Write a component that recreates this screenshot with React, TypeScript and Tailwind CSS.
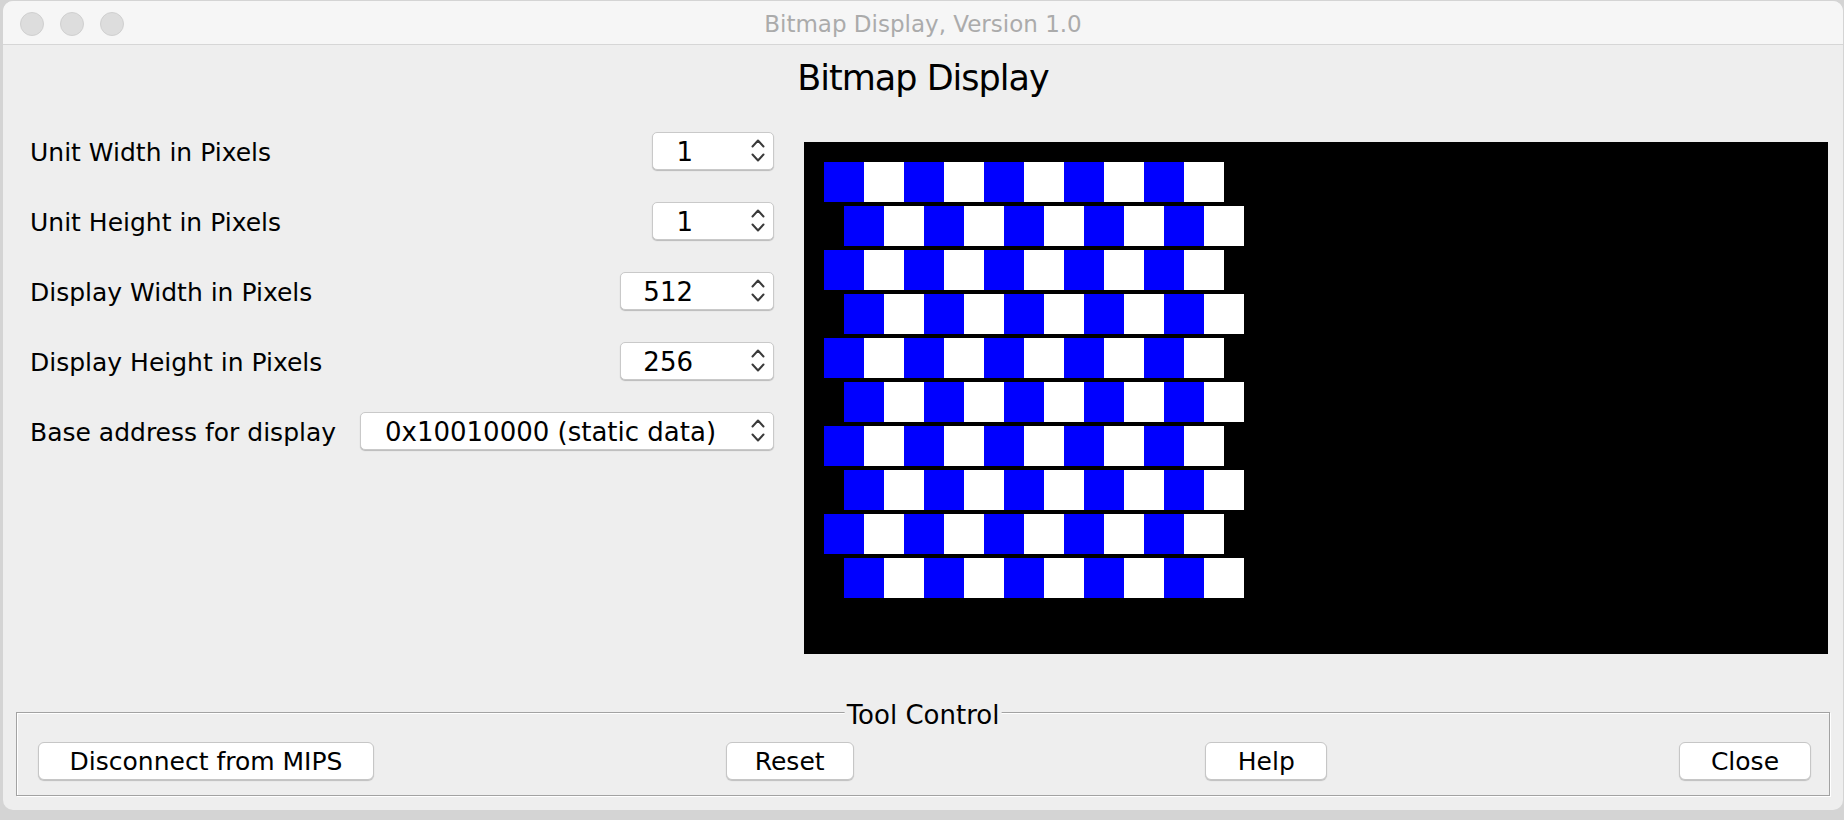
import React from 'react';

const FONT = "font-['DejaVu_Sans',sans-serif]";

// bitmap: 10 rows of 10 cells, odd rows shifted half a cell
const rows = Array.from({ length: 10 }, (_, r) => r);
const cols = Array.from({ length: 10 }, (_, c) => c);

function Chevrons() {
  return (
    <svg width="14" height="26" viewBox="0 0 14 26" fill="none">
      <path
        d="M1.5 8.5 L7 2.5 L12.5 8.5"
        stroke="#3a3a3a"
        strokeWidth="2"
        strokeLinecap="round"
        strokeLinejoin="round"
      />
      <path
        d="M1.5 16.5 L7 22.5 L12.5 16.5"
        stroke="#3a3a3a"
        strokeWidth="2"
        strokeLinecap="round"
        strokeLinejoin="round"
      />
    </svg>
  );
}

function Spinner({ value, width }: { value: string; width: string }) {
  return (
    <div
      className={`${width} h-[38px] flex items-center justify-end bg-white border border-[#c9c9c9] rounded-[5px] shadow-[0_1px_1px_rgba(0,0,0,0.22)]`}
    >
      <span className="text-[26px] leading-none pt-[2px] text-black">{value}</span>
      <span className="ml-[58px] mr-[8px] flex">
        <Chevrons />
      </span>
    </div>
  );
}

function Row({ label, children }: { label: string; children: React.ReactNode }) {
  return (
    <div className="flex items-center justify-between h-[38px]">
      <span className="text-[25px] leading-[38px] pt-[4px] text-black">{label}</span>
      {children}
    </div>
  );
}

function Button({ label, width }: { label: string; width: string }) {
  return (
    <button
      className={`${width} h-[38px] bg-white border border-[#c6c6c6] rounded-[6px] shadow-[0_1px_1px_rgba(0,0,0,0.2)] text-[25px] leading-none text-black flex items-center justify-center`}
    >
      {label}
    </button>
  );
}

export default function App() {
  return (
    <div className={`w-[1844px] h-[820px] bg-[#d4d4d4] pt-[1px] pl-[3px] pr-[1px] ${FONT}`}>
      <div className="w-[1840px] h-[809px] bg-[#eeeeee] rounded-[10px] overflow-hidden flex flex-col">
        {/* title bar */}
        <div className="h-[44px] shrink-0 bg-[#f6f6f6] border-b border-[#d6d6d6] grid grid-cols-[1fr_auto_1fr]">
          <div className="flex gap-[16px] pl-[17px] pt-[11px]">
            <span className="w-[24px] h-[24px] rounded-full bg-[#dddddd] border border-[#d0d0d0]" />
            <span className="w-[24px] h-[24px] rounded-full bg-[#dddddd] border border-[#d0d0d0]" />
            <span className="w-[24px] h-[24px] rounded-full bg-[#dddddd] border border-[#d0d0d0]" />
          </div>
          <div className="text-[23px] leading-[44px] pt-[1px] text-[#ababab]">Bitmap Display, Version 1.0</div>
          <div />
        </div>

        {/* heading */}
        <h1 className="mt-[11px] text-center text-[35px] leading-[44px] tracking-[-1px] text-black">
          Bitmap Display
        </h1>

        {/* settings + bitmap */}
        <div className="mt-[32px] flex pl-[27px] pr-[15px] gap-[30px]">
          <div className="w-[744px] flex flex-col gap-[32px]">
            <Row label="Unit Width in Pixels">
              <Spinner value="1" width="w-[122px]" />
            </Row>
            <Row label="Unit Height in Pixels">
              <Spinner value="1" width="w-[122px]" />
            </Row>
            <Row label="Display Width in Pixels">
              <Spinner value="512" width="w-[154px]" />
            </Row>
            <Row label="Display Height in Pixels">
              <Spinner value="256" width="w-[154px]" />
            </Row>
            <Row label="Base address for display">
              <div className="w-[414px] h-[38px] flex items-center justify-between bg-white border border-[#c9c9c9] rounded-[5px] shadow-[0_1px_1px_rgba(0,0,0,0.22)] pl-[24px] pr-[8px]">
                <span className="text-[26px] leading-none pt-[2px] text-black">0x10010000 (static data)</span>
                <Chevrons />
              </div>
            </Row>
          </div>

          <div className="mt-[10px] w-[1024px] h-[512px] shrink-0">
            <svg width="1024" height="512" viewBox="0 0 1024 512" className="block">
              <rect width="1024" height="512" fill="#000000" />
              {rows.map((r) =>
                cols.map((c) => (
                  <rect
                    key={`${r}-${c}`}
                    x={(r % 2 === 0 ? 20 : 40) + c * 40}
                    y={20 + r * 44}
                    width="40"
                    height="40"
                    fill={c % 2 === 0 ? '#0000ff' : '#ffffff'}
                  />
                ))
              )}
            </svg>
          </div>
        </div>

        {/* Tool Control group */}
        <div className="relative mt-[58px] mx-[13px] border border-[#a2a2a2] shadow-[inset_1px_1px_0_#ffffff,1px_1px_0_#ffffff] pt-[29px] pb-[15px] pl-[21px] pr-[18px] flex justify-between">
          <span className="absolute left-1/2 -translate-x-1/2 -top-[12px] bg-[#eeeeee] px-[2px] text-[26px] leading-[28px] text-black">
            Tool Control
          </span>
          <Button label="Disconnect from MIPS" width="w-[336px]" />
          <Button label="Reset" width="w-[128px]" />
          <Button label="Help" width="w-[122px]" />
          <Button label="Close" width="w-[132px]" />
        </div>
      </div>
    </div>
  );
}
